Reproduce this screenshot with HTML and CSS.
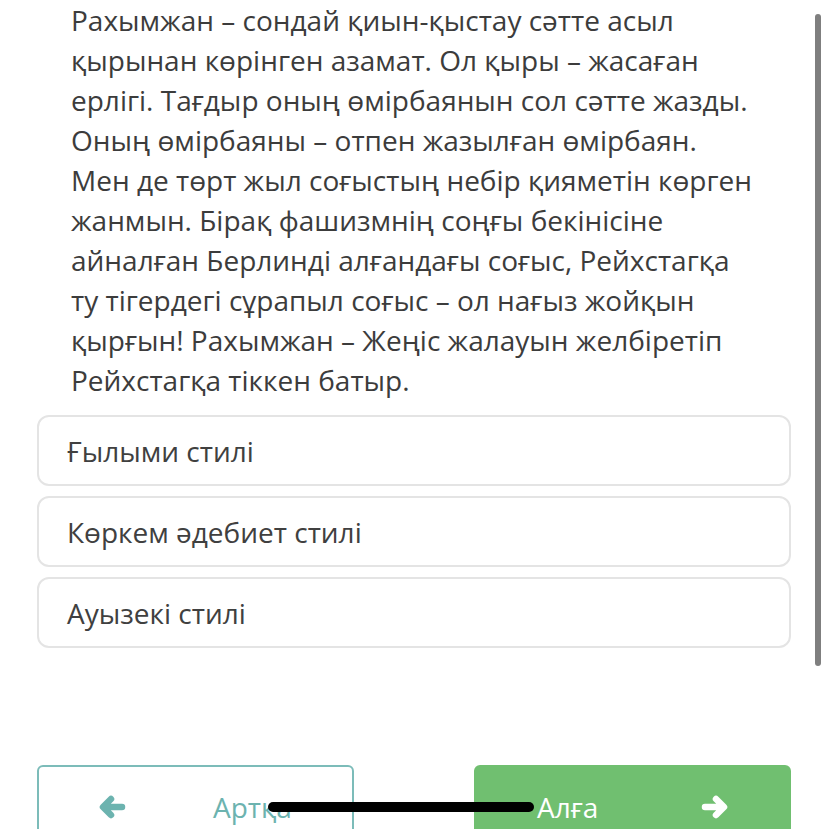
FILE: index.html
```html
<!DOCTYPE html>
<html lang="kk">
<head>
  <meta charset="UTF-8" />
  <meta name="viewport" content="width=device-width, initial-scale=1.0" />
  <title>Тест</title>
  <link rel="stylesheet" href="styles.css">
</head>
<body>
  <div class="question">
    <p class="passage">
      Рахымжан – сондай қиын-қыстау сәтте асыл қырынан көрінген азамат. Ол қыры – жасаған ерлігі. Тағдыр оның өмірбаянын сол сәтте жазды. Оның өмірбаяны – отпен жазылған өмірбаян.<br>
      Мен де төрт жыл соғыстың небір қияметін көрген жанмын. Бірақ фашизмнің соңғы бекінісіне айналған Берлинді алғандағы соғыс, Рейхстагқа ту тігердегі сұрапыл соғыс – ол нағыз жойқын қырғын! Рахымжан – Жеңіс жалауын желбіретіп Рейхстагқа тіккен батыр.
    </p>

    <div class="answers">
      <div class="answer">Ғылыми стилі</div>
      <div class="answer">Көркем әдебиет стилі</div>
      <div class="answer">Ауызекі стилі</div>
    </div>
  </div>

  <div class="nav">
    <button class="btn btn-back">
      <svg class="arrow" viewBox="0 0 28 26"><path d="M24 13H6M13 5L5 13L13 21"/></svg>
      <span>Артқа</span>
    </button>
    <button class="btn btn-next">
      <span>Алға</span>
      <svg class="arrow" viewBox="0 0 28 26"><path d="M4 13H22M15 5L23 13L15 21"/></svg>
    </button>
  </div>

  <!-- overlays from the phone screenshot -->
  <div class="scrollbar"></div>
  <div class="home-bar"></div>
</body>
</html>
```

FILE: styles.css
```css
body {
  margin: 0;
  padding: 0;
  background-color: #fff;
  font-family: "Open Sans", Arial, sans-serif;
  color: #3c3c3c;
  overflow: hidden;
}
.question {
  padding: 0 37px 0 37px;
}
.passage {
  margin: 0;
  padding: 0 34px 0 34px;
  font-size: 28px;
  line-height: 40px;
}
.answers {
  display: flex;
  flex-direction: column;
  gap: 10px;
  margin-top: 15px;
}
.answer {
  height: 67px;
  display: flex;
  align-items: center;
  padding: 0 28px;
  border: 2px solid #e4e4e4;
  border-radius: 12px;
  font-size: 28px;
  color: #404040;
}
.nav {
  display: flex;
  justify-content: space-between;
  margin: 117px 37px 0 37px;
}
.btn {
  width: 317px;
  height: 84px;
  display: flex;
  align-items: center;
  border-radius: 6px;
  font-family: "Open Sans", Arial, sans-serif;
  font-size: 28px;
  cursor: pointer;
}
.btn-back {
  gap: 87px;
  padding: 0 0 0 59px;
  background-color: #fff;
  border: 2px solid #7cbcb9;
  color: #6cb3af;
}
.btn-next {
  justify-content: space-between;
  padding: 0 60px 0 61px;
  background-color: #70bf70;
  border: 2px solid #70bf70;
  color: #fff;
}
.arrow {
  width: 28px;
  height: 26px;
  fill: none;
  stroke: currentColor;
  stroke-width: 6.5;
  stroke-linecap: round;
  stroke-linejoin: round;
}
.scrollbar {
  position: fixed;
  top: 14px;
  right: 7px;
  width: 6px;
  height: 652px;
  border-radius: 3px;
  background-color: #7f7f7f;
}
.home-bar {
  position: fixed;
  left: 268px;
  top: 802px;
  width: 266px;
  height: 10px;
  border-radius: 5px;
  background-color: #000;
}
```
